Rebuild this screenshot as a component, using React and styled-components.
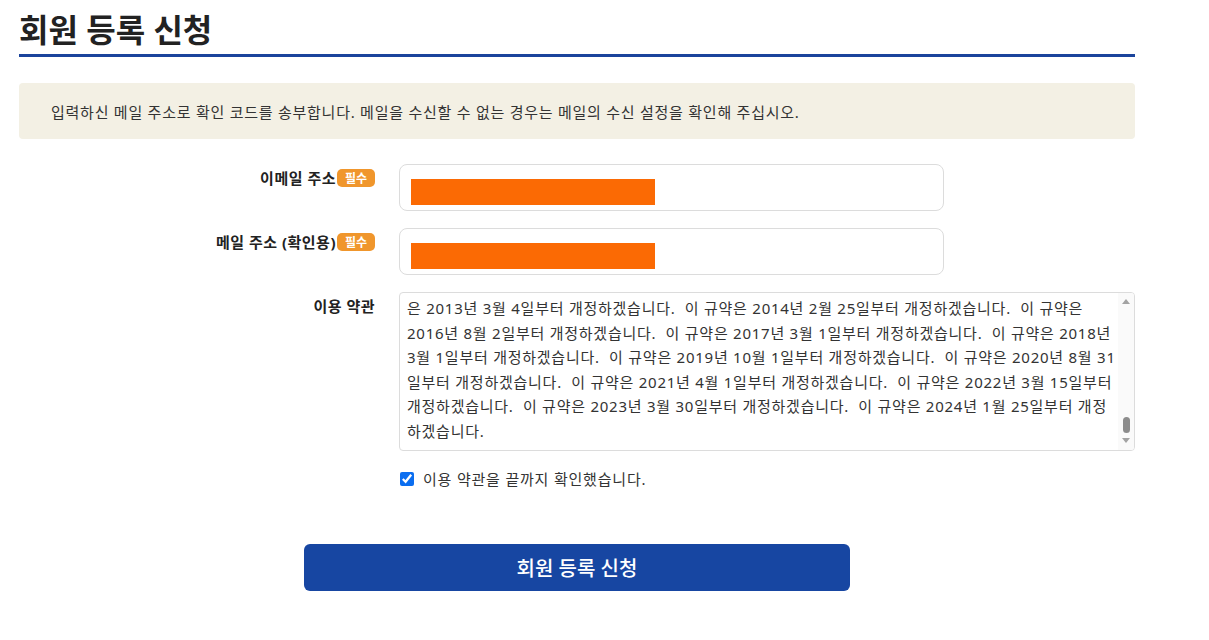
import React from "react";
import styled, { createGlobalStyle } from "styled-components";

const GlobalStyle = createGlobalStyle`
  body {
    margin: 0;
    background: #fff;
    font-family: "Noto Sans", "Noto Sans CJK KR", sans-serif;
    color: #222;
  }
`;

const Page = styled.div`
  width: 1116px;
  margin-left: 19px;
  padding-top: 10px;
`;

const Title = styled.h1`
  margin: 0;
  font-size: 32px;
  line-height: 40px;
  font-weight: 700;
  color: #222;
  padding-bottom: 4px;
  border-bottom: 3px solid #1b449c;
`;

const Notice = styled.div`
  margin-top: 26px;
  height: 56px;
  display: flex;
  align-items: center;
  padding-left: 32px;
  background: #f3f0e4;
  border-radius: 4px;
  font-size: 15px;
  letter-spacing: 0.75px;
  color: #333;
`;

const Form = styled.div`
  margin-top: 25px;
  display: grid;
  grid-template-columns: 356px 1fr;
  column-gap: 24px;
  row-gap: 17px;
`;

const Label = styled.div`
  display: flex;
  justify-content: flex-end;
  align-items: center;
  align-self: start;
  height: 24px;
  padding-top: 1px;
  font-size: 15px;
  letter-spacing: 0.5px;
  font-weight: 700;
  color: #222;
`;

const Badge = styled.span`
  margin-left: 1px;
  margin-top: 2px;
  display: inline-flex;
  align-items: center;
  justify-content: center;
  width: 38px;
  height: 18px;
  border-radius: 5px;
  background: #f0962c;
  color: #fff;
  font-size: 12px;
  letter-spacing: 0;
  font-weight: 700;
`;

const InputBox = styled.div`
  box-sizing: border-box;
  width: 545px;
  height: 47px;
  border: 1px solid #dcdcdc;
  border-radius: 8px;
  padding: 14px 11px 0;
`;

const Redacted = styled.div`
  width: 244px;
  height: 26px;
  background: #fb6a04;
`;

const TermsBox = styled.div`
  box-sizing: border-box;
  height: 159px;
  display: flex;
  border: 1px solid #dcdcdc;
  border-radius: 4px;
  overflow: hidden;
`;

const TermsText = styled.div`
  flex: 1;
  overflow: hidden;
  padding: 3px 7px 0;
  font-size: 15px;
  letter-spacing: 0.75px;
  line-height: 24.5px;
  color: #333;
`;

const TermsLine = styled.div`
  white-space: pre;
`;

const ScrollBar = styled.div`
  width: 16px;
  display: flex;
  flex-direction: column;
  align-items: center;
  padding: 6px 0 7px;
  background: #fafafa;
`;

const Arrow = styled.div`
  width: 0;
  height: 0;
  border-left: 4px solid transparent;
  border-right: 4px solid transparent;
  ${({ $down }) =>
    $down ? "border-top: 5px solid #a3a3a3;" : "border-bottom: 5px solid #a3a3a3;"}
`;

const Track = styled.div`
  flex: 1;
`;

const Thumb = styled.div`
  width: 7px;
  height: 16px;
  border-radius: 4px;
  background: #8c8c8c;
  margin-bottom: 5px;
`;

const CheckRow = styled.label`
  grid-column: 2;
  display: flex;
  align-items: center;
  font-size: 15px;
  letter-spacing: 0.8px;
  color: #333;

  input {
    width: 14px;
    height: 14px;
    margin: 3px 9px 3px 1px;
    accent-color: #0b6ef0;
  }
`;

const SubmitRow = styled.div`
  display: flex;
  justify-content: center;
  margin-top: 55px;
`;

const SubmitButton = styled.button`
  width: 546px;
  height: 47px;
  border: none;
  border-radius: 6px;
  background: #1746a2;
  color: #fff;
  font-family: inherit;
  font-size: 20px;
  font-weight: 500;
`;

// the terms box is shown scrolled to its end
const termsLines = [
  "은 2013년 3월 4일부터 개정하겠습니다.  이 규약은 2014년 2월 25일부터 개정하겠습니다.  이 규약은",
  "2016년 8월 2일부터 개정하겠습니다.  이 규약은 2017년 3월 1일부터 개정하겠습니다.  이 규약은 2018년",
  "3월 1일부터 개정하겠습니다.  이 규약은 2019년 10월 1일부터 개정하겠습니다.  이 규약은 2020년 8월 31",
  "일부터 개정하겠습니다.  이 규약은 2021년 4월 1일부터 개정하겠습니다.  이 규약은 2022년 3월 15일부터",
  "개정하겠습니다.  이 규약은 2023년 3월 30일부터 개정하겠습니다.  이 규약은 2024년 1월 25일부터 개정",
  "하겠습니다.",
];

const App = () => {
  return (
    <Page>
      <GlobalStyle />
      <Title>회원 등록 신청</Title>
      <Notice>
        입력하신 메일 주소로 확인 코드를 송부합니다. 메일을 수신할 수 없는 경우는 메일의 수신 설정을 확인해 주십시오.
      </Notice>
      <Form>
        <Label>
          이메일 주소<Badge>필수</Badge>
        </Label>
        <InputBox>
          <Redacted />
        </InputBox>

        <Label>
          메일 주소 (확인용)<Badge>필수</Badge>
        </Label>
        <InputBox>
          <Redacted />
        </InputBox>

        <Label>이용 약관</Label>
        <TermsBox>
          <TermsText>
            {termsLines.map((l, i) => (
              <TermsLine key={i}>{l}</TermsLine>
            ))}
          </TermsText>
          <ScrollBar>
            <Arrow />
            <Track />
            <Thumb />
            <Arrow $down />
          </ScrollBar>
        </TermsBox>

        <CheckRow>
          <input type="checkbox" defaultChecked />
          이용 약관을 끝까지 확인했습니다.
        </CheckRow>
      </Form>
      <SubmitRow>
        <SubmitButton type="button">회원 등록 신청</SubmitButton>
      </SubmitRow>
    </Page>
  );
};

export default App;
